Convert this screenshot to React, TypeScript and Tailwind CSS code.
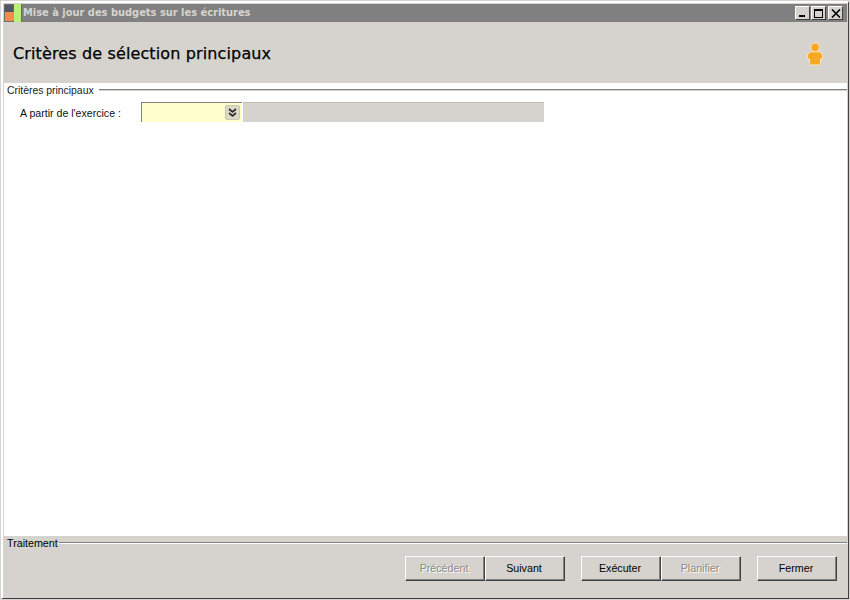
import React from "react";

function WinBtn({ children }: { children: React.ReactNode }) {
  return (
    <div className="w-[15px] h-[14px] bg-[#d6d3ce] border border-t-white border-l-white border-r-[#404040] border-b-[#404040] flex items-center justify-center">
      {children}
    </div>
  );
}

function Btn({ label, disabled }: { label: string; disabled?: boolean }) {
  return (
    <div
      className={`w-[80px] h-[25px] pr-[2px] flex items-center justify-center text-[10.7px] border border-t-white border-l-white border-r-[#404040] border-b-[#404040] shadow-[inset_-1px_-1px_0_#808080] ${disabled ? "text-[#8a8a86] [text-shadow:1px_1px_0_#ffffff]" : "text-black"}`}
    >
      {label}
    </div>
  );
}

export default function App() {
  return (
    <div className="w-[850px] h-[600px] overflow-hidden bg-[#d6d3ce] flex flex-col border border-[#d6d3ce] font-['Liberation_Sans',sans-serif]">
      <div className="flex-1 min-h-0 flex flex-col border-t-2 border-l-2 border-t-white border-l-white border-r border-b border-r-[#404040] border-b-[#404040] pt-px pl-px pr-px pb-px">
        <div className="h-[18px] shrink-0 bg-[#808080] flex items-center">
          <svg width="18" height="18" viewBox="0 0 18 18" className="shrink-0">
            <rect x="0" y="0" width="18" height="18" fill="#6a6a6a" />
            <rect x="1" y="1" width="8" height="7" fill="#55585a" />
            <rect x="1" y="8" width="9" height="9" fill="#f58a4a" />
            <rect x="10" y="0" width="7" height="18" fill="#b8f07a" />
          </svg>
          <span className="ml-px text-[9.9px] font-bold text-[#d6d3ce] font-['DejaVu_Sans',sans-serif] whitespace-nowrap">
            Mise à jour des budgets sur les écritures
          </span>
          <div className="ml-auto mr-[4px] flex items-center">
            <WinBtn>
              <div className="w-[6px] h-[2px] bg-black mt-[6px] -ml-[2px]" />
            </WinBtn>
            <div className="ml-px">
              <WinBtn>
                <div className="w-[9px] h-[9px] border border-black border-t-2" />
              </WinBtn>
            </div>
            <div className="ml-[2px]">
              <WinBtn>
                <svg width="10" height="9" viewBox="0 0 10 9">
                  <path d="M1 0.5 L9 8.5 M9 0.5 L1 8.5" stroke="#000" strokeWidth="1.6" fill="none" />
                </svg>
              </WinBtn>
            </div>
          </div>
        </div>

        <div className="h-[61px] shrink-0 flex items-center justify-between pl-[9px] pr-[23px]">
          <span className="text-[16px] tracking-[0.13px] [-webkit-text-stroke:0.25px_black] text-black font-['DejaVu_Sans',sans-serif] whitespace-nowrap mt-[2px]">
            Critères de sélection principaux
          </span>
          <svg width="18" height="24" viewBox="0 0 16 22" className="mt-[2px]">
            <circle cx="8" cy="5" r="4" fill="#f7a823" stroke="#fff3d8" strokeWidth="0.7" />
            <path
              d="M4 9 H12 Q15 10 15 13 V15.5 H13 V20 Q13 21 12 21 H4 Q3 21 3 20 V15.5 H1 V13 Q1 10 4 9 Z"
              fill="#f7a823"
              stroke="#fff3d8"
              strokeWidth="0.7"
            />
          </svg>
        </div>

        <div className="flex-1 min-h-0 bg-white flex flex-col">
          <div className="h-[14px] flex items-start pl-[3px]">
            <span className="text-[10.4px] text-[#1a1a1a] leading-[14px] pt-px whitespace-nowrap">Critères principaux</span>
            <div className="flex-1 ml-[5px] mt-[6px] h-[2px] border-t border-t-[#808080] border-b border-b-[#d6d3ce]" />
          </div>
          <div className="flex items-start mt-[5px]">
            <span className="w-[137px] pl-[16px] pt-[4px] text-[10.6px] text-[#111] whitespace-nowrap leading-[14px]">
              A partir de l'exercice :
            </span>
            <div className="w-[101px] h-[20px] bg-[#ffffcc] border-t border-l border-t-[#808080] border-l-[#808080] flex items-center justify-end pr-[2px]">
              <div className="w-[15px] h-[15px] bg-[#dcdac6] rounded-[2px] border border-[#c8c6b0] flex items-center justify-center">
                <svg width="9" height="10" viewBox="0 0 9 10">
                  <path d="M1 1 L4.5 4 L8 1 M1 5 L4.5 8 L8 5" stroke="#2a2a2a" strokeWidth="1.7" fill="none" />
                </svg>
              </div>
            </div>
            <div className="ml-px w-[301px] h-[20px] bg-[#d6d3ce] border-t border-t-[#c0bcb4]" />
          </div>
          <div className="flex-1" />
        </div>

        <div className="h-[61px] shrink-0 flex flex-col">
          <div className="h-[14px] flex items-center pl-[3px]">
            <span className="text-[10.7px] text-black leading-none whitespace-nowrap">Traitement</span>
            <div className="flex-1 ml-px h-[2px] border-t border-t-[#808080] border-b border-b-white" />
          </div>
          <div className="flex justify-end pt-[6px] pr-[10px]">
            <Btn label="Précédent" disabled />
            <Btn label="Suivant" />
            <div className="ml-[16px]">
              <Btn label="Exécuter" />
            </div>
            <Btn label="Planifier" disabled />
            <div className="ml-[16px]">
              <Btn label="Fermer" />
            </div>
          </div>
        </div>
      </div>
    </div>
  );
}
